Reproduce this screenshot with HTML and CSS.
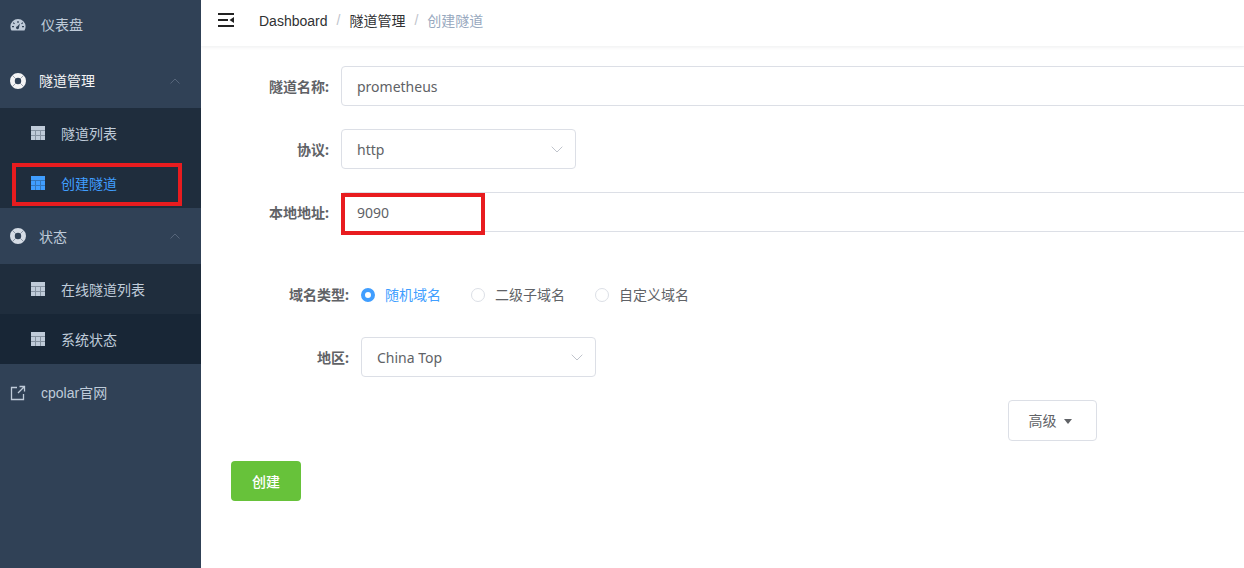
FILE: index.html
```html
<!doctype html>
<html lang="zh">
  <head>
    <meta charset="UTF-8" />
    <meta name="viewport" content="width=device-width, initial-scale=1.0" />
    <title>创建隧道</title>
    <link rel="stylesheet" href="styles.css">
  </head>
  <body>
    <svg class="icon-defs" width="0" height="0">
      <symbol id="icon-table" viewBox="0 0 14 14">
        <path fill="currentColor" opacity="0.65" d="M0 0h14v14H0z"/>
        <path fill="currentColor" d="M0 0h14v4H0zM0 5h4v4H0zM5 5h4v4H5zM10 5h4v4h-4zM0 10h4v4H0zM5 10h4v4H5zM10 10h4v4h-4z"/>
      </symbol>
      <symbol id="icon-ring" viewBox="0 0 16 16">
        <path fill="currentColor" fill-rule="evenodd" d="M8 0a8 8 0 1 1 0 16A8 8 0 0 1 8 0zm0 4.8a3.2 3.2 0 1 0 0 6.4 3.2 3.2 0 0 0 0-6.4z"/>
        <path stroke="#304156" stroke-opacity="0.45" stroke-width="1" d="M2.3 2.3l3.4 3.4M13.7 2.3l-3.4 3.4M2.3 13.7l3.4-3.4M13.7 13.7l-3.4-3.4"/>
      </symbol>
    </svg>

    <div class="app">
      <aside class="sidebar">
        <a class="menu-item menu-top">
          <svg class="menu-icon" width="16" height="14" viewBox="0 0 16 14">
            <path fill="currentColor" fill-rule="evenodd" d="M8 1a7.6 7.6 0 0 1 7.6 7.6c0 1.5-.4 2.8-1.1 3.9H1.5A7.6 7.6 0 0 1 .4 8.6 7.6 7.6 0 0 1 8 1zM7.4 3v2h1.2V3zM3.6 4.2l-.8.8 1.3 1.3.8-.8zm8.8 0L11.1 5.5l.8.8 1.3-1.3zM2 8v1.2h2V8zm10 0v1.2h2V8zM9.9 5.6L7.4 8.2a1.5 1.5 0 1 0 1.6 1.4z"/>
          </svg>
          <span>仪表盘</span>
        </a>

        <div class="submenu-title is-open">
          <svg class="ring-icon" width="16" height="16"><use href="#icon-ring"/></svg>
          <span>隧道管理</span>
          <svg class="arrow" width="10" height="6" viewBox="0 0 10 6"><path d="M.5 5.5L5 1l4.5 4.5" fill="none" stroke="currentColor"/></svg>
        </div>
        <div class="submenu">
          <a class="sub-item">
            <svg width="14" height="14"><use href="#icon-table"/></svg>
            <span>隧道列表</span>
          </a>
          <a class="sub-item active">
            <svg width="14" height="14"><use href="#icon-table"/></svg>
            <span>创建隧道</span>
          </a>
        </div>

        <div class="submenu-title">
          <svg class="ring-icon" width="16" height="16"><use href="#icon-ring"/></svg>
          <span>状态</span>
          <svg class="arrow" width="10" height="6" viewBox="0 0 10 6"><path d="M.5 5.5L5 1l4.5 4.5" fill="none" stroke="currentColor"/></svg>
        </div>
        <div class="submenu">
          <a class="sub-item">
            <svg width="14" height="14"><use href="#icon-table"/></svg>
            <span>在线隧道列表</span>
          </a>
          <a class="sub-item hovered">
            <svg width="14" height="14"><use href="#icon-table"/></svg>
            <span>系统状态</span>
          </a>
        </div>

        <a class="menu-item menu-link">
          <svg class="menu-icon" width="16" height="16" viewBox="0 0 16 16">
            <path d="M7 2.5H1.5v12h12V9M9.5 1.5h5v5M14.5 1.5L8 8" fill="none" stroke="currentColor" stroke-width="1.3"/>
          </svg>
          <span>cpolar官网</span>
        </a>
      </aside>

      <main class="main">
        <header class="navbar">
          <svg class="hamburger" width="16" height="14" viewBox="0 0 16 14">
            <path d="M0 1h16M0 7h10M0 13h16" stroke="#222" stroke-width="2" fill="none"/>
            <path d="M11.5 7L16 4v6z" fill="#222"/>
          </svg>
          <nav class="breadcrumb">
            <span class="crumb-root">Dashboard</span>
            <i>/</i>
            <span>隧道管理</span>
            <i>/</i>
            <span class="current">创建隧道</span>
          </nav>
        </header>

        <form class="form">
          <div class="form-row">
            <label class="form-label">隧道名称:</label>
            <div class="field field-wide">prometheus</div>
          </div>

          <div class="form-row">
            <label class="form-label">协议:</label>
            <div class="field field-select">
              <span>http</span>
              <svg width="12" height="7" viewBox="0 0 12 7"><path d="M.7.7L6 6l5.3-5.3" fill="none" stroke="#c0c4cc"/></svg>
            </div>
          </div>

          <div class="form-row">
            <label class="form-label">本地地址:</label>
            <div class="field field-wide">9090</div>
          </div>

          <div class="form-row nested radio-row">
            <label class="form-label">域名类型:</label>
            <div class="radio-group">
              <span class="radio checked"><i></i>随机域名</span>
              <span class="radio"><i></i>二级子域名</span>
              <span class="radio"><i></i>自定义域名</span>
            </div>
          </div>

          <div class="form-row nested">
            <label class="form-label">地区:</label>
            <div class="field field-select">
              <span>China Top</span>
              <svg width="12" height="7" viewBox="0 0 12 7"><path d="M.7.7L6 6l5.3-5.3" fill="none" stroke="#c0c4cc"/></svg>
            </div>
          </div>

          <div class="advanced-row">
            <button type="button" class="btn-advanced"><span>高级</span><b class="caret"></b></button>
          </div>

          <button type="button" class="btn-create">创建</button>
        </form>
      </main>
    </div>

    <!-- red marks drawn over the shot -->
    <div class="mark mark-menu"></div>
    <div class="mark mark-port"></div>
  </body>
</html>
```

FILE: styles.css
```css
* {
  margin: 0;
  padding: 0;
  box-sizing: border-box;
}

html,
body {
  height: 100%;
  overflow: hidden;
}

body {
  font-family: 'Noto Sans', 'Noto Sans CJK SC', sans-serif;
  font-size: 14px;
  color: #606266;
  background: #fff;
}

.icon-defs {
  position: absolute;
}

.app {
  display: flex;
  height: 568px;
}

/* sidebar */
.sidebar {
  width: 201px;
  flex-shrink: 0;
  background: #304156;
  color: #bfcbd9;
  font-family: 'Liberation Sans', 'Noto Sans CJK SC', sans-serif;
  font-size: 14px;
}

.menu-item {
  display: flex;
  align-items: center;
  height: 50px;
  padding-left: 10px;
  gap: 15px;
}

.menu-item span,
.is-open span {
  margin-bottom: 2px;
}

.menu-top {
  margin-bottom: 4px;
}

.menu-link {
  margin-top: 4px;
}

.submenu-title {
  display: flex;
  align-items: center;
  height: 56px;
  padding-left: 10px;
  gap: 13px;
}

.submenu-title.is-open {
  height: 54px;
  color: #f4f4f5;
}

.ring-icon {
  color: #f4f4f5;
}

.submenu-title:not(.is-open) .ring-icon {
  color: #d5dce5;
}

.arrow {
  margin-left: auto;
  margin-right: 21px;
  color: #56657a;
}

.submenu {
  background: #1f2d3d;
}

.sub-item {
  display: flex;
  align-items: center;
  height: 50px;
  padding-left: 31px;
  gap: 16px;
}

.sub-item.active {
  color: #409eff;
}

.sub-item.hovered {
  background: #182636;
}

/* top bar */
.main {
  flex: 1;
  min-width: 0;
  overflow: hidden;
}

.navbar {
  display: flex;
  align-items: center;
  height: 46px;
  padding-left: 17px;
  box-shadow: 0 1px 4px rgba(0, 21, 41, 0.08);
}

.hamburger {
  margin-top: -6px;
  margin-right: 25px;
}

.breadcrumb {
  display: flex;
  align-items: center;
  color: #303133;
  font-family: 'Liberation Sans', 'Noto Sans CJK SC', sans-serif;
  margin-top: -7px;
}

.crumb-root {
  margin-top: 2px;
}

.breadcrumb i {
  font-style: normal;
  color: #c0c4cc;
  margin: 0 9px;
}

.breadcrumb .current {
  color: #97a8be;
}

/* form */
.form {
  padding: 20px 0 0 30px;
}

.form-row {
  display: flex;
  align-items: center;
  height: 40px;
  margin-bottom: 23px;
}

.form-label {
  width: 98px;
  margin-right: 12px;
  text-align: right;
  font-weight: 700;
  flex-shrink: 0;
}

.nested .form-label {
  width: 118px;
}

.radio-row {
  margin-top: 42px;
}

.field {
  height: 40px;
  display: flex;
  align-items: center;
  padding: 0 15px;
  background: #fff;
  border: 1px solid #dcdfe6;
  border-radius: 4px;
}

.field-wide {
  width: 1200px;
  flex-shrink: 0;
}

.field-select {
  width: 235px;
  justify-content: space-between;
}

.field-select svg {
  margin-right: -3px;
}

.radio-group {
  display: flex;
  gap: 30px;
}

.radio {
  display: flex;
  align-items: center;
  gap: 10px;
}

.radio i {
  width: 14px;
  height: 14px;
  margin-top: 1px;
  border: 1px solid #dcdfe6;
  border-radius: 50%;
  background: #fff;
}

.radio.checked {
  color: #409eff;
}

.radio.checked i {
  border: 4.5px solid #409eff;
}

.advanced-row {
  margin-left: 777px;
  margin-bottom: 20px;
}

.btn-advanced {
  display: flex;
  align-items: center;
  justify-content: center;
  width: 89px;
  height: 41px;
  padding: 0 5px 1px 0;
  font: inherit;
  color: #606266;
  background: #fff;
  border: 1px solid #dcdfe6;
  border-radius: 4px;
}

.caret {
  width: 0;
  height: 0;
  margin-left: 7px;
  margin-top: 2px;
  border-left: 4.5px solid transparent;
  border-right: 4.5px solid transparent;
  border-top: 5px solid #606266;
}

.btn-create {
  display: block;
  width: 70px;
  height: 40px;
  font: inherit;
  font-weight: 500;
  color: #fff;
  background: #67c23a;
  border: none;
  border-radius: 4px;
}

/* annotations */
.mark {
  position: absolute;
  border: 4px solid #e81c1f;
}

.mark-menu {
  left: 12px;
  top: 163px;
  width: 170px;
  height: 43px;
}

.mark-port {
  left: 341px;
  top: 193px;
  width: 144px;
  height: 42px;
}
```
